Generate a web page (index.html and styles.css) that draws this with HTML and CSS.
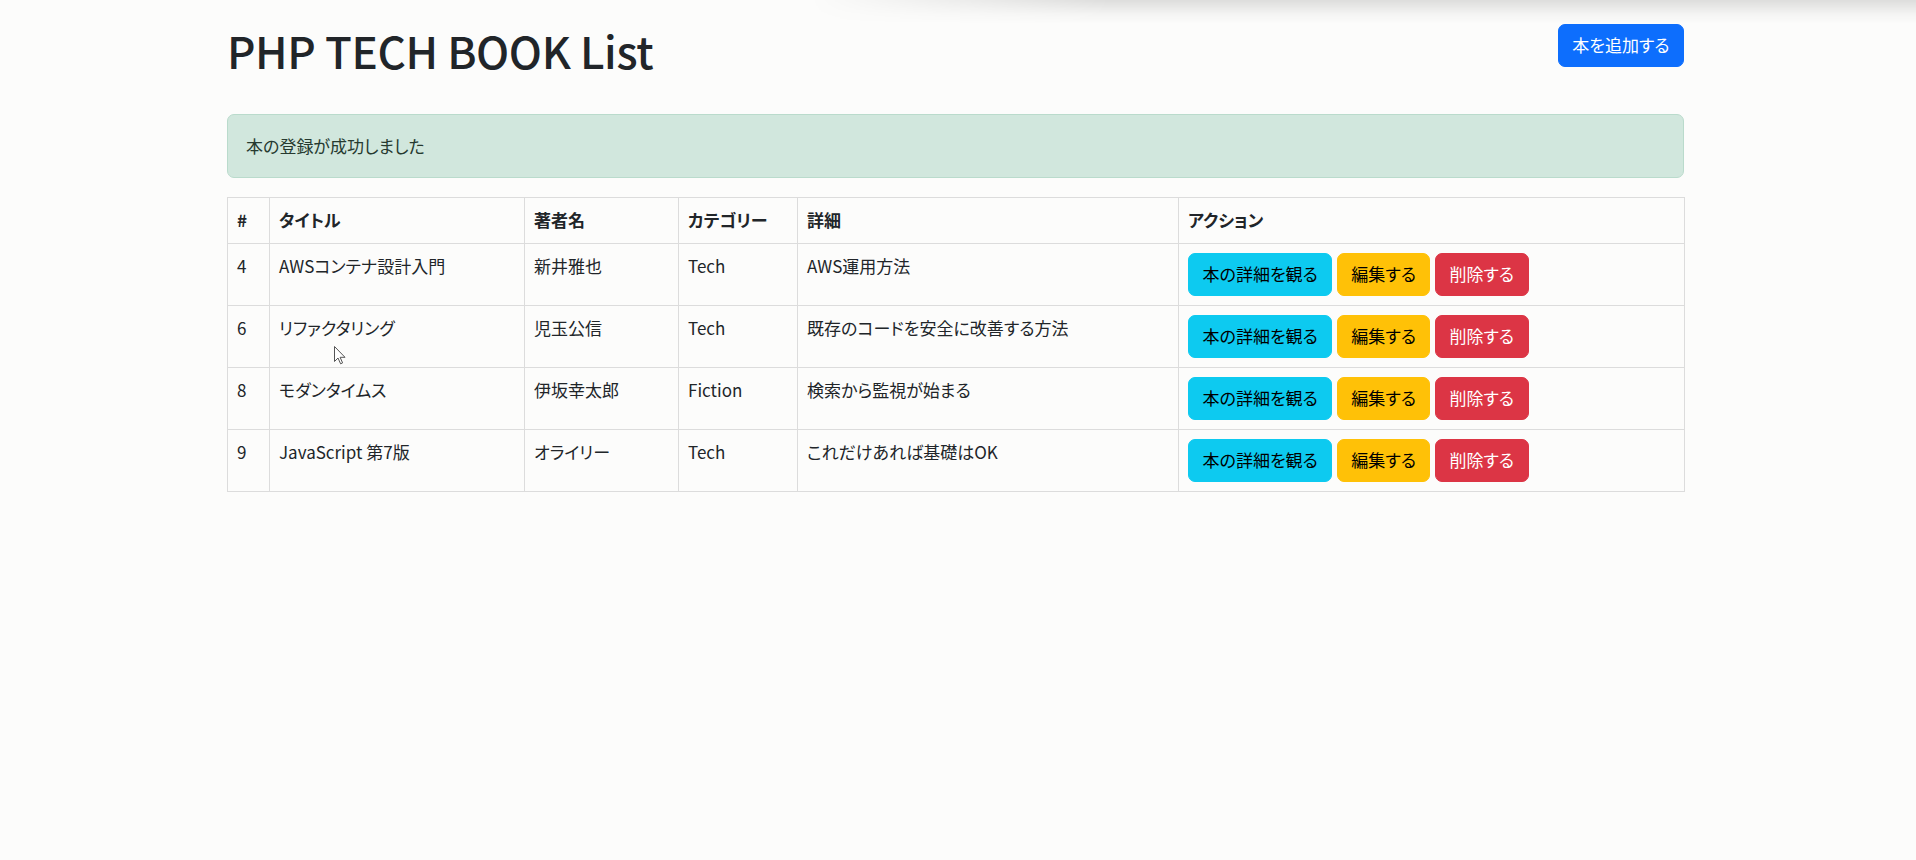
FILE: index.html
```html
<!DOCTYPE html>
<html lang="ja">
<head>
<meta charset="utf-8">
<title>PHP TECH BOOK List</title>
<link rel="stylesheet" href="styles.css">
</head>
<body>
<div class="top-shadow"></div>
<div class="container">
  <header class="page-header">
    <h1 class="page-title">PHP TECH BOOK List</h1>
    <a class="btn btn-primary" href="#">本を追加する</a>
  </header>
  <div class="alert alert-success">本の登録が成功しました</div>
  <table class="book-table">
    <colgroup>
      <col class="c-id"><col class="c-title"><col class="c-author"><col class="c-cat"><col class="c-detail"><col class="c-action">
    </colgroup>
    <thead>
      <tr><th>#</th><th>タイトル</th><th>著者名</th><th>カテゴリー</th><th>詳細</th><th>アクション</th></tr>
    </thead>
    <tbody>
      <tr>
        <td>4</td><td>AWSコンテナ設計入門</td><td>新井雅也</td><td>Tech</td><td>AWS運用方法</td>
        <td><div class="actions"><a class="btn btn-info" href="#">本の詳細を観る</a><a class="btn btn-warning" href="#">編集する</a><a class="btn btn-danger" href="#">削除する</a></div></td>
      </tr>
      <tr>
        <td>6</td><td>リファクタリング</td><td>児玉公信</td><td>Tech</td><td>既存のコードを安全に改善する方法</td>
        <td><div class="actions"><a class="btn btn-info" href="#">本の詳細を観る</a><a class="btn btn-warning" href="#">編集する</a><a class="btn btn-danger" href="#">削除する</a></div></td>
      </tr>
      <tr>
        <td>8</td><td>モダンタイムス</td><td>伊坂幸太郎</td><td>Fiction</td><td>検索から監視が始まる</td>
        <td><div class="actions"><a class="btn btn-info" href="#">本の詳細を観る</a><a class="btn btn-warning" href="#">編集する</a><a class="btn btn-danger" href="#">削除する</a></div></td>
      </tr>
      <tr>
        <td>9</td><td>JavaScript 第7版</td><td>オライリー</td><td>Tech</td><td>これだけあれば基礎はOK</td>
        <td><div class="actions"><a class="btn btn-info" href="#">本の詳細を観る</a><a class="btn btn-warning" href="#">編集する</a><a class="btn btn-danger" href="#">削除する</a></div></td>
      </tr>
    </tbody>
  </table>
</div>
<svg class="cursor" width="13" height="19" viewBox="0 0 13 19" aria-hidden="true">
  <path d="M0.5 0.5 L0.5 15.5 L4 12 L6.6 17.8 L8.6 16.9 L6.1 11.3 L11 11.3 Z" fill="#fff" stroke="#555" stroke-width="1" stroke-linejoin="round"/>
</svg>
</body>
</html>
```
FILE: styles.css
```css
html, body {
  margin: 0;
  padding: 0;
}
body {
  background: #fcfcfb;
  color: #212529;
  font-family: "Noto Sans CJK JP", "Noto Sans", sans-serif;
  font-feature-settings: "palt";
  font-size: 17px;
  line-height: 27px;
  position: relative;
  min-height: 860px;
}
.top-shadow {
  position: absolute;
  top: 0;
  left: 810px;
  right: 0;
  height: 24px;
  background: linear-gradient(to bottom, rgba(0,0,0,0.12), rgba(0,0,0,0.03) 60%, rgba(0,0,0,0));
  -webkit-mask-image: linear-gradient(to right, transparent, #000 300px);
  mask-image: linear-gradient(to right, transparent, #000 300px);
  pointer-events: none;
}
.container {
  width: 1457px;
  margin: 0 0 0 227px;
}
.page-header {
  display: flex;
  justify-content: space-between;
  align-items: flex-start;
  padding-top: 24px;
  margin-bottom: 36px;
}
.page-title {
  margin: -1px 0 1px;
  font-size: 44px;
  line-height: 54px;
  font-weight: 500;
  letter-spacing: -0.4px;
  color: #212529;
}
.btn {
  display: inline-block;
  padding: 6px 13.5px 8px;
  border: 1px solid transparent;
  border-radius: 7px;
  font-size: 17px;
  line-height: 27px;
  text-decoration: none;
  white-space: nowrap;
}
.btn-primary { background: #0d6efd; border-color: #0d6efd; color: #fff; }
.btn-info { background: #0dcaf0; border-color: #0dcaf0; color: #000; }
.btn-warning { background: #ffc107; border-color: #ffc107; color: #000; }
.btn-danger { background: #dc3545; border-color: #dc3545; color: #fff; }
.alert {
  padding: 16.5px 18px 18.5px;
  border: 1px solid #badbcc;
  border-radius: 7px;
  margin-bottom: 19px;
}
.alert-success {
  background: #d1e7dd;
  color: #263a30;
}
.book-table {
  width: 1457px;
  table-layout: fixed;
  border-collapse: collapse;
}
.c-id { width: 42px; }
.c-title { width: 255px; }
.c-author { width: 154px; }
.c-cat { width: 119px; }
.c-detail { width: 381px; }
.c-action { width: 506px; }
.book-table th,
.book-table td {
  border: 1px solid #dcdcdc;
  padding: 8px 9px 10px;
  text-align: left;
  vertical-align: top;
}
.book-table th {
  font-weight: 700;
}
.book-table td:last-child {
  padding-top: 9px;
  padding-bottom: 9px;
}
.actions {
  display: flex;
  gap: 4.5px;
}
.cursor {
  position: absolute;
  left: 334px;
  top: 346px;
}
```
